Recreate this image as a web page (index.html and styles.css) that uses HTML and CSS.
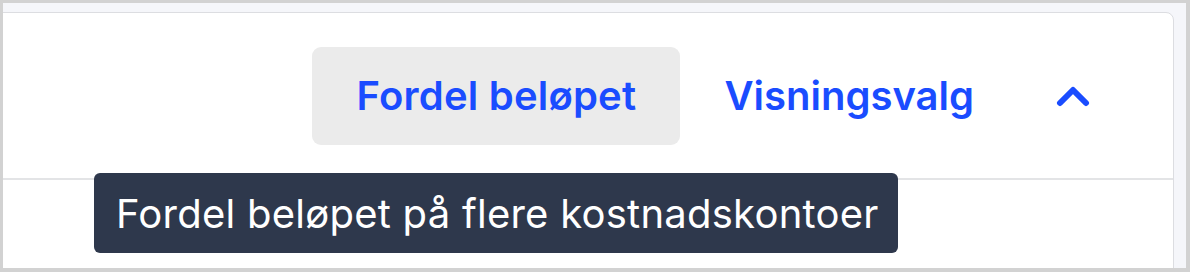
FILE: index.html
```html
<!DOCTYPE html>
<html lang="no">
<head>
    <meta charset="UTF-8">
    <title>Fordel beløpet</title>
    <link rel="stylesheet" href="styles.css">
</head>
<body>
    <div class="frame">
        <div class="card">
            <div class="toolbar">
                <button class="split-btn">Fordel beløpet</button>
                <a class="view-link" href="#">Visningsvalg</a>
                <button class="toggle-btn" aria-label="Skjul">
                    <svg width="34" height="22" viewBox="0 0 34 22">
                        <path d="M4 18 L17 5 L30 18" fill="none" stroke="#1a4cff" stroke-width="6" stroke-linecap="round" stroke-linejoin="round"/>
                    </svg>
                </button>
            </div>
            <div class="card-body"></div>

            <div class="tooltip">Fordel beløpet på flere kostnadskontoer</div>
        </div>
    </div>
</body>
</html>
```

FILE: styles.css
```css
* {
    box-sizing: border-box;
}

body {
    margin: 0;
    font-family: Inter, "Noto Sans", sans-serif;
    background: #d2d2d2;
}

.frame {
    height: 272px;
    border: 3px solid #d2d2d2;
    border-right-width: 4px;
    border-bottom-width: 4px;
    background: #f5f6fa;
    padding-top: 9px;
    padding-right: 12px;
    overflow: hidden;
}

.card {
    position: relative;
    margin-left: -1px;
    height: 300px;
    background: #ffffff;
    border: 1px solid #dcdde1;
    border-radius: 0 8px 0 0;
}

.toolbar {
    display: flex;
    align-items: center;
    justify-content: flex-end;
    height: 167px;
    padding-right: 83px;
    border-bottom: 2px solid #e3e4e6;
}

.split-btn {
    width: 368px;
    height: 98px;
    border: none;
    border-radius: 9px;
    background: #ebebeb;
    color: #1a4cff;
    font-family: inherit;
    font-size: 40px;
    font-weight: 600;
    letter-spacing: 0.2px;
    cursor: pointer;
}

.view-link {
    margin-left: 44px;
    color: #1a4cff;
    font-size: 40px;
    font-weight: 600;
    text-decoration: none;
}

.toggle-btn {
    margin-left: 82px;
    padding: 0;
    border: none;
    background: none;
    display: flex;
    cursor: pointer;
}

.tooltip {
    position: absolute;
    left: 91px;
    top: 160px;
    width: 804px;
    height: 80px;
    padding-left: 22px;
    display: flex;
    align-items: center;
    background: #2e384c;
    border-radius: 6px;
    color: #ffffff;
    font-size: 40px;
    letter-spacing: 0.25px;
}
```
